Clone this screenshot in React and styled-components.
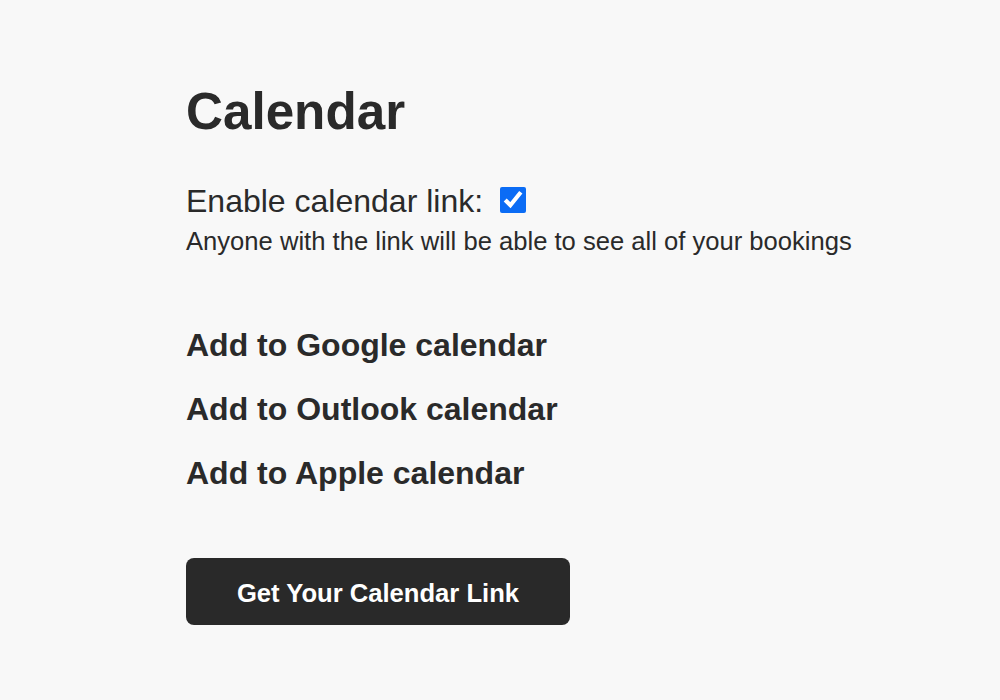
import styled, { createGlobalStyle } from 'styled-components';

const LINKS = [
  'Add to Google calendar',
  'Add to Outlook calendar',
  'Add to Apple calendar',
];

export default function App() {
  return (
    <>
      <GlobalStyle />
      <Page>
        <Title>Calendar</Title>

        <EnableRow>
          <EnableLabel htmlFor="cal-enable">Enable calendar link:</EnableLabel>
          <Checkbox id="cal-enable" type="checkbox" defaultChecked />
        </EnableRow>
        <Hint>Anyone with the link will be able to see all of your bookings</Hint>

        <LinkList>
          {LINKS.map((label) => (
            <CalLink key={label} href="#">{label}</CalLink>
          ))}
        </LinkList>

        <LinkButton type="button">Get Your Calendar Link</LinkButton>
      </Page>
    </>
  );
}

const GlobalStyle = createGlobalStyle`
  * { box-sizing: border-box; }
  html, body {
    margin: 0;
    background: #f8f8f8;
  }
  body {
    font-family: 'Liberation Sans', Arial, Helvetica, sans-serif;
    color: #2a2a2a;
  }
`;

const Page = styled.div`
  min-height: 700px;
  padding: 82px 0 0 186px;
  display: flex;
  flex-direction: column;
  align-items: flex-start;
`;

const Title = styled.h1`
  margin: 0;
  font-size: 51.2px;
  line-height: 60px;
  font-weight: 700;
`;

const EnableRow = styled.div`
  margin-top: 41px;
  display: flex;
  align-items: center;
  gap: 17px;
  height: 36px;
`;

const EnableLabel = styled.label`
  font-size: 32px;
  line-height: 36px;
`;

const Checkbox = styled.input`
  width: 26px;
  height: 26px;
  margin: -3px 0 0;
  accent-color: #0b6cf5;
`;

const Hint = styled.p`
  margin: 7px 0 0;
  font-size: 25.6px;
  line-height: 30px;
`;

const LinkList = styled.div`
  margin-top: 69px;
  display: flex;
  flex-direction: column;
  gap: 24px;
`;

const CalLink = styled.a`
  font-size: 32px;
  line-height: 40px;
  font-weight: 700;
  color: #2a2a2a;
  text-decoration: none;
`;

const LinkButton = styled.button`
  margin-top: 65px;
  width: 384px;
  height: 67px;
  padding: 3px 0 0;
  border: none;
  border-radius: 8px;
  background: #292929;
  color: #ffffff;
  font-family: inherit;
  font-size: 25.6px;
  font-weight: 700;
  cursor: pointer;
`;
